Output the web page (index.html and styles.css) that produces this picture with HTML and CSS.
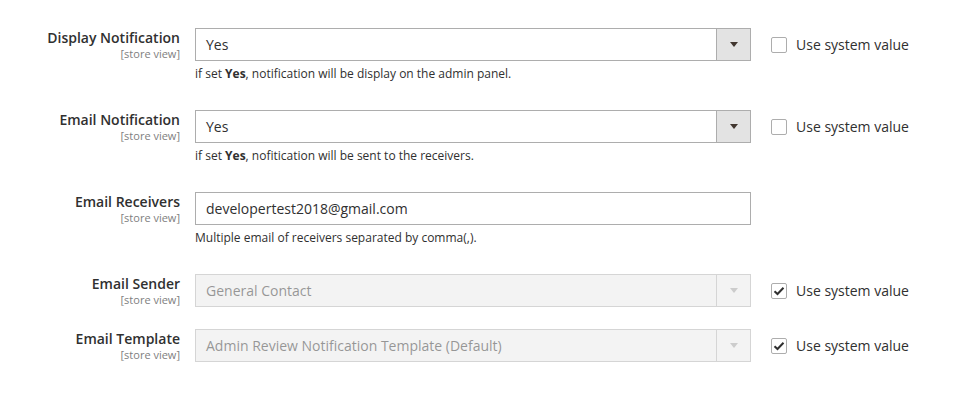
FILE: index.html
```html
<!DOCTYPE html>
<html lang="en">
<head>
    <meta charset="UTF-8">
    <meta name="viewport" content="width=device-width, initial-scale=1.0">
    <title>Notification Settings</title>
    <link rel="stylesheet" href="styles.css">
</head>
<body>
    <!-- notification config fields -->
    <div class="fieldset">
        <div class="field">
            <div class="label">
                <span class="label-text">Display Notification</span>
                <span class="scope">[store view]</span>
            </div>
            <div class="control">
                <div class="select">
                    <span class="value">Yes</span>
                    <span class="arrow"></span>
                </div>
                <div class="note">if set <b>Yes</b>, notification will be display on the admin panel.</div>
            </div>
            <label class="use-default">
                <span class="checkbox"></span>
                <span>Use system value</span>
            </label>
        </div>

        <div class="field">
            <div class="label">
                <span class="label-text">Email Notification</span>
                <span class="scope">[store view]</span>
            </div>
            <div class="control">
                <div class="select">
                    <span class="value">Yes</span>
                    <span class="arrow"></span>
                </div>
                <div class="note">if set <b>Yes</b>, nofitication will be sent to the receivers.</div>
            </div>
            <label class="use-default">
                <span class="checkbox"></span>
                <span>Use system value</span>
            </label>
        </div>

        <div class="field">
            <div class="label">
                <span class="label-text">Email Receivers</span>
                <span class="scope">[store view]</span>
            </div>
            <div class="control">
                <div class="input">developertest2018@gmail.com</div>
                <div class="note">Multiple email of receivers separated by comma(,).</div>
            </div>
        </div>

        <div class="field">
            <div class="label">
                <span class="label-text">Email Sender</span>
                <span class="scope">[store view]</span>
            </div>
            <div class="control">
                <div class="select disabled">
                    <span class="value">General Contact</span>
                    <span class="arrow"></span>
                </div>
            </div>
            <label class="use-default">
                <span class="checkbox">
                    <svg width="12" height="10" viewBox="0 0 12 10"><path d="M1.5 5.2 L4.5 8 L10.5 1.8" fill="none" stroke="#303030" stroke-width="2"/></svg>
                </span>
                <span>Use system value</span>
            </label>
        </div>

        <div class="field">
            <div class="label">
                <span class="label-text">Email Template</span>
                <span class="scope">[store view]</span>
            </div>
            <div class="control">
                <div class="select disabled">
                    <span class="value">Admin Review Notification Template (Default)</span>
                    <span class="arrow"></span>
                </div>
            </div>
            <label class="use-default">
                <span class="checkbox">
                    <svg width="12" height="10" viewBox="0 0 12 10"><path d="M1.5 5.2 L4.5 8 L10.5 1.8" fill="none" stroke="#303030" stroke-width="2"/></svg>
                </span>
                <span>Use system value</span>
            </label>
        </div>
    </div>
</body>
</html>
```

FILE: styles.css
```css
* {
    box-sizing: border-box;
}

body {
    margin: 0;
    padding: 0;
    background-color: #fff;
    font-family: "Open Sans", Arial, sans-serif;
    color: #303030;
}

.fieldset {
    padding-top: 28px;
    display: flex;
    flex-direction: column;
    gap: 22px;
}

.field {
    display: flex;
    align-items: flex-start;
}

.label {
    width: 180px;
    margin-right: 15px;
    padding-top: 2px;
    display: flex;
    flex-direction: column;
    align-items: flex-end;
    text-align: right;
}

.label-text {
    font-size: 14px;
    font-weight: 600;
    line-height: 16px;
}

.scope {
    margin-top: 1px;
    font-size: 11px;
    line-height: 13px;
    color: #808080;
}

.control {
    width: 556px;
}

.select,
.input {
    height: 33px;
    border: 1px solid #adadad;
    background-color: #fff;
    font-size: 14px;
    display: flex;
    align-items: center;
    padding-left: 10px;
}

.select {
    justify-content: space-between;
    padding-right: 0;
}

.select .arrow {
    width: 34px;
    height: 100%;
    border-left: 1px solid #adadad;
    background-color: #e3e3e3;
    display: flex;
    align-items: center;
    justify-content: center;
}

.select .arrow::before {
    content: "";
    border-left: 4px solid transparent;
    border-right: 4px solid transparent;
    border-top: 5px solid #41362f;
}

.select.disabled {
    opacity: 0.5;
    background-color: #e9e9e9;
}

.select.disabled .arrow {
    background-color: #e9e9e9;
}

.select.disabled .arrow::before {
    border-top-color: #9a9a9a;
}

.note {
    font-size: 12px;
    line-height: 18px;
    margin-top: 4px;
    margin-bottom: 5px;
}

.note b {
    font-weight: 700;
}

.use-default {
    margin-left: 20px;
    height: 33px;
    display: flex;
    align-items: center;
    gap: 9px;
    font-size: 14px;
}

.checkbox {
    width: 16px;
    height: 16px;
    border: 1px solid #adadad;
    border-radius: 2px;
    background-color: #fff;
    display: flex;
    align-items: center;
    justify-content: center;
}
```
